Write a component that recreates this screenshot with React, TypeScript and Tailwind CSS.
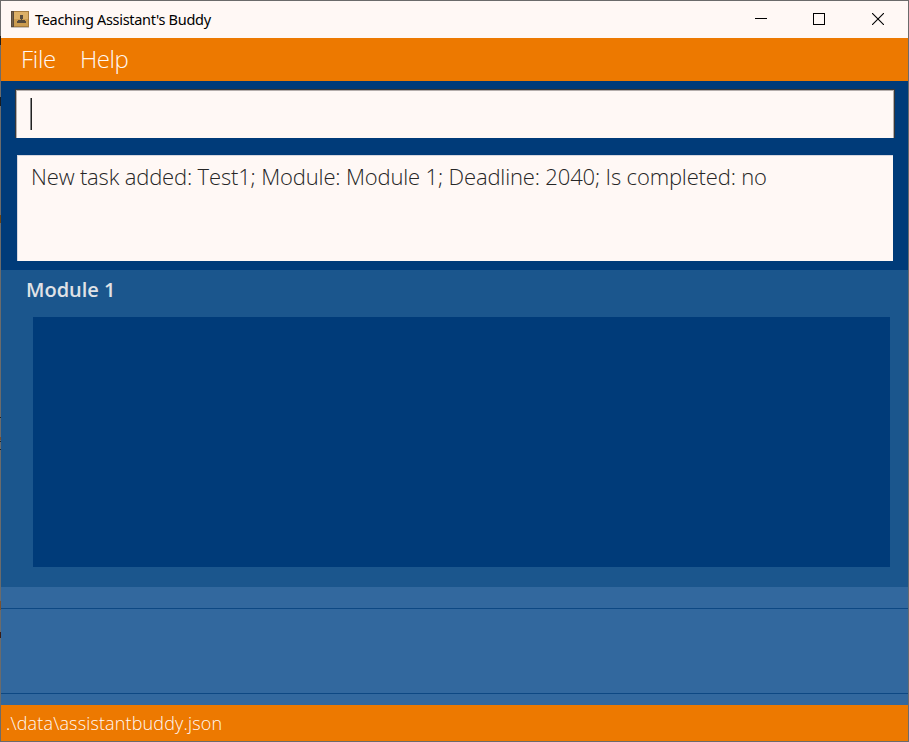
import React from "react";

function BookIcon() {
  return (
    <svg width="18" height="17" viewBox="0 0 18 17" shapeRendering="crispEdges">
      <rect x="0" y="0" width="18" height="16" fill="#a57c3f" />
      <rect x="3" y="1" width="14" height="14" fill="#dcb067" />
      <rect x="3" y="8" width="14" height="7" fill="#cb9c50" />
      <rect x="0" y="0" width="3" height="16" fill="#5a4a3a" />
      <rect x="1" y="1" width="1" height="14" fill="#75624b" />
      <rect x="0" y="16" width="18" height="1" fill="#c9c1bb" />
      <path d="M9 4h3v4h-1v1h3v1h1v2h-9v-2h1v-1h3v-1h-1z" fill="#574b3c" />
    </svg>
  );
}

function TitleBar() {
  return (
    <header className="flex h-[37px] shrink-0 items-center bg-[#fff8f5] pl-[10px]">
      <BookIcon />
      <span className="ml-[6px] font-['Noto_Sans',sans-serif] text-[14.5px] tracking-[-0.3px] text-black">
        Teaching Assistant's Buddy
      </span>
      <div className="ml-auto flex items-center pb-px pr-[24px]">
        <svg width="12" height="12" shapeRendering="crispEdges"><rect y="5" width="12" height="1" /></svg>
        <svg className="ml-[46px]" width="12" height="12" shapeRendering="crispEdges"><rect x=".5" y=".5" width="11" height="11" fill="none" stroke="#000" /></svg>
        <svg className="ml-[47px]" width="12" height="12"><path d="M0 0L12 12M12 0L0 12" stroke="#000" strokeWidth="1.1" /></svg>
      </div>
    </header>
  );
}

/* Bits of the desktop that show along the window's left edge. */
function EdgeMarks() {
  return (
    <svg className="absolute -left-px -top-px" width="1" height="742" shapeRendering="crispEdges">
      <rect y="36" width="1" height="9" fill="#1c1c1c" />
      <rect y="97" width="1" height="9" fill="#1c1c1c" />
      <rect y="215" width="1" height="8" fill="#6b4412" />
      <rect y="417" width="1" height="1" fill="#222" />
      <rect y="437" width="1" height="3" fill="#7a4d2a" />
      <rect y="441" width="1" height="1" fill="#222" />
      <rect y="449" width="1" height="1" fill="#222" />
      <rect y="601" width="1" height="9" fill="#7a5230" />
      <rect y="632" width="1" height="6" fill="#3a1c14" />
    </svg>
  );
}

export default function App() {
  return (
    <div className="relative flex h-[742px] w-[909px] flex-col border border-[#6b6b6b] bg-[#003b79] font-['Open_Sans',sans-serif]">
      <TitleBar />
      <nav className="flex h-[43px] shrink-0 items-center gap-[24px] bg-[#ed7900] pb-[2px] pl-[20px] text-[24px] font-light text-[#fff8f5]">
        <span className="tracking-[-0.3px]">File</span>
        <span className="tracking-[-0.4px]">Help</span>
      </nav>
      <section className="h-[189px] shrink-0 pl-[14px] pr-[13px] pt-[8px]">
        <div className="h-[49px] border-l border-r border-t border-[#383838]">
          <div className="flex h-full items-start border-l border-r border-t border-[#b5aeac] bg-[#fff8f5] pl-[13px] pt-[7px]">
            <div className="h-[32px] w-[2px] border-l border-l-[#888] bg-[#222]" />
          </div>
        </div>
        <div className="ml-[2px] mr-[2px] mt-[17px] h-[106px] border-l border-t border-[#d6d6df] bg-[#fff8f5] pl-[13px] pt-[3px] text-[22px] font-light leading-[34px] tracking-[-0.16px] text-[#262626]">
          New task added: Test1; Module: Module 1; Deadline: 2040; Is completed: no
        </div>
      </section>
      <section className="h-[317px] shrink-0 bg-[#1b568d] pl-[32px] pr-[18px]">
        <h2 className="-ml-[7px] h-[47px] pt-[5px] text-[20px] font-semibold leading-[30px] text-[#e0e2e6]">Module 1</h2>
        <div className="h-[250px] bg-[#003b79]" />
      </section>
      <section className="flex h-[118px] shrink-0 flex-col bg-[#32689e] pt-[21px]">
        <div className="h-[86px] border-y border-[#0d4883]" />
      </section>
      <footer className="flex h-[36px] shrink-0 items-center bg-[#ed7900] pl-[5px] text-[18px] font-light tracking-[0.15px] text-[#fff8f5]">
        <span>.\data\assistantbuddy.json</span>
      </footer>
      <EdgeMarks />
    </div>
  );
}
